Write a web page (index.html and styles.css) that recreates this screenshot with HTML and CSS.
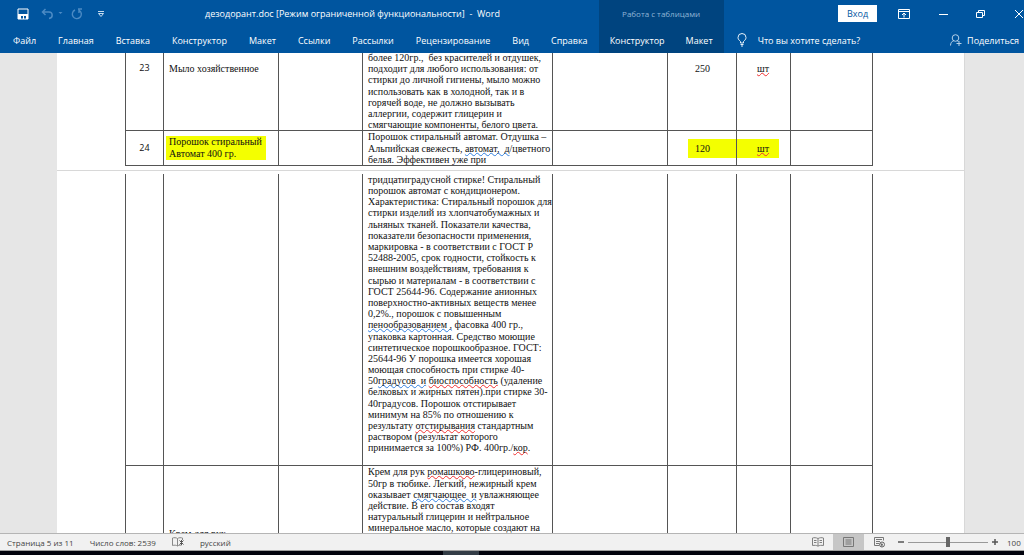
FILE: index.html
```
<!DOCTYPE html>
<html lang="ru">
<head>
<meta charset="utf-8">
<title>дезодорант.doc - Word</title>
<link rel="stylesheet" href="styles.css">
</head>
<body>
<header class="ribbon">
  <div class="title-bar">
    <div class="quick-access">
      <button class="icon-button" aria-label="Сохранить"><svg width="12" height="12" viewBox="0 0 12 12"><path d="M1 1h10v10H1z" fill="none" stroke="#fff"/><path d="M1 6h10v5H9V8H7v3H6V8H4v3H1z" fill="#fff"/></svg></button>
      <button class="icon-button undo" aria-label="Отменить"><svg width="22" height="12" viewBox="0 0 22 12"><path d="M4.500 1L1.500 4l3 3M2 4h6c4 0 4.500 6 0 6.500" fill="none" stroke="#4c8bc4" stroke-width="1.500"/><path d="M17.500 4h4l-2 2z" fill="#4c8bc4"/></svg></button>
      <button class="icon-button redo" aria-label="Повторить"><svg width="12" height="12" viewBox="0 0 12 12"><path d="M8.500 2.500A4.500 4.500 0 1 1 4 2M7 1h4M8 1v4" fill="none" stroke="#4c8bc4" stroke-width="1.400"/></svg></button>
      <button class="icon-button" aria-label="Настройка панели"><svg width="8" height="8" viewBox="0 0 8 8"><path d="M1 1.500h6M1.500 3.500h5L4 6.500z" fill="none" stroke="#c5dbee"/></svg></button>
    </div>
    <span class="document-name">дезодорант.doc [Режим ограниченной функциональности]&nbsp; -&nbsp; Word</span>
  </div>
  <div class="context-title">Работа с таблицами</div>
  <div class="window-controls">
    <button class="sign-in">Вход</button>
    <button class="icon-button" aria-label="Параметры ленты"><svg width="12" height="10" viewBox="0 0 12 10"><path d="M.5.5h11v9H.5zM.5 2.500h11M6 8.500v-4M4 6l2-2 2 2" fill="none" stroke="#fff"/></svg></button>
    <button class="icon-button" aria-label="Свернуть"><svg width="10" height="10" viewBox="0 0 10 10"><path d="M1 5.500h9" stroke="#fff"/></svg></button>
    <button class="icon-button" aria-label="Свернуть в окно"><svg width="10" height="10" viewBox="0 0 10 10"><path d="M.5 3.500h6v5h-6zM2.500 3V1.500h6v5H7" fill="none" stroke="#fff"/></svg></button>
    <button class="icon-button" aria-label="Закрыть"><svg width="10" height="10" viewBox="0 0 10 10"><path d="M1 1l8 8M9 1L1 9" stroke="#fff"/></svg></button>
  </div>
  <nav class="tabs main-tabs">
    <button class="tab">Файл</button>
    <button class="tab">Главная</button>
    <button class="tab">Вставка</button>
    <button class="tab">Конструктор</button>
    <button class="tab">Макет</button>
    <button class="tab">Ссылки</button>
    <button class="tab">Рассылки</button>
    <button class="tab">Рецензирование</button>
    <button class="tab">Вид</button>
    <button class="tab">Справка</button>
  </nav>
  <nav class="tabs context-tabs">
    <button class="tab">Конструктор</button>
    <button class="tab">Макет</button>
  </nav>
  <div class="ribbon-tools">
    <button class="tool"><svg width="10" height="14" viewBox="0 0 10 14"><path d="M3.500 10V8.500C2.500 7.500 1 6.500 1 4.500a4 4 0 0 1 8 0c0 2-1.500 3-2.500 4V10zM3.500 11.500h3M4 13h2" fill="none" stroke="#e6f0f8"/></svg>Что вы хотите сделать?</button>
    <button class="tool share"><svg width="12" height="12" viewBox="0 0 12 12"><circle cx="5.500" cy="4" r="3.300" fill="none" stroke="#b5d0e8"/><path d="M.5 11.500c0-2.500 1.500-4.500 3.500-5M7 6.500l1.500 1M9 7v5M6.500 9.500h5" fill="none" stroke="#b5d0e8"/></svg>Поделиться</button>
  </div>
</header>

<main class="workspace">
  <div class="sheet">
    <table class="goods goods-first">
      <colgroup><col class="c-num"><col class="c-name"><col class="c-blank"><col class="c-text"><col class="c-wide"><col class="c-count"><col class="c-unit"><col class="c-last"></colgroup>
      <tr class="row-23">
        <td class="number">23</td><td>Мыло хозяйственное</td><td></td>
        <td class="text">более 120гр.,&nbsp; без красителей и отдушек,<br>подходит для любого использования: от<br>стирки до личной гигиены, мыло можно<br>использовать как в холодной, так и в<br>горячей воде, не должно вызывать<br>аллергии, содержит глицерин и<br>смягчающие компоненты, белого цвета.</td>
        <td></td><td class="count">250</td><td class="unit"><span class="spelling">шт</span></td><td></td>
      </tr>
      <tr class="row-24">
        <td class="number">24</td><td class="marked-cell"><div class="mark mark-name">Порошок стиральный<br>Автомат 400 гр.</div></td><td></td>
        <td class="text">Порошок стиральный автомат. Отдушка –<br>Альпийская свежесть, <span class="grammar">автомат,&nbsp; д</span>/цветного<br>белья. Эффективен уже при</td>
        <td></td><td class="marked-cell"><div class="mark mark-count">120</div></td><td class="marked-cell"><div class="mark mark-unit"><span class="spelling">шт</span></div></td><td></td>
      </tr>
    </table>
  </div>
  <div class="sheet">
    <table class="goods goods-next">
      <colgroup><col class="c-num"><col class="c-name"><col class="c-blank"><col class="c-text"><col class="c-wide"><col class="c-count"><col class="c-unit"><col class="c-last"></colgroup>
      <tr class="row-rest">
        <td></td><td></td><td></td>
        <td class="text">тридцатиградусной стирке! Стиральный<br>порошок автомат с кондиционером.<br>Характеристика: Стиральный порошок для<br>стирки изделий из хлопчатобумажных и<br>льняных тканей. Показатели качества,<br>показатели безопасности применения,<br>маркировка - в соответствии с ГОСТ Р<br>52488-2005, срок годности, стойкость к<br>внешним воздействиям, требования к<br>сырью и материалам - в соответствии с<br>ГОСТ 25644-96. Содержание анионных<br>поверхностно-активных веществ менее<br>0,2%., порошок с повышенным<br><span class="grammar">пенообразованием ,</span> фасовка 400 гр.,<br>упаковка картонная. Средство моющие<br>синтетическое порошкообразное. ГОСТ:<br>25644-96 У порошка имеется хорошая<br>моющая способность при стирке 40-<br>50<span class="grammar">градусов&nbsp; и</span> <span class="spelling">биоспособность</span> (удаление<br>белковых и жирных пятен).при стирке 30-<br>40градусов. Порошок отстирывает<br>минимум на 85% по отношению к<br>результату <span class="spelling">отстирывания</span> стандартным<br>раствором (результат которого<br>принимается за 100%) РФ. 400гр./<span class="spelling">кор</span>.</td>
        <td></td><td></td><td></td><td></td>
      </tr>
      <tr class="row-25">
        <td></td><td class="low">Крем для рук</td><td></td>
        <td class="text">Крем для рук <span class="spelling">ромашково</span>-глицериновый,<br>50гр в тюбике. Легкий, нежирный крем<br>оказывает <span class="grammar">смягчающее&nbsp; и</span> увлажняющее<br>действие. В его состав входят<br>натуральный глицерин и нейтральное<br>минеральное масло, которые создают на</td>
        <td></td><td></td><td></td><td></td>
      </tr>
    </table>
  </div>
</main>

<footer class="status-bar">
  <span>Страница 5 из 11</span>
  <span>Число слов: 2539</span>
  <svg width="12" height="10" viewBox="0 0 12 10"><path d="M5.500 1.500C4 .5 2 .5.5 1v7.500c2-.5 3.500-.5 5 .5zC7 .5 9 .5 10.500 1v2M5.500 9c1-.7 2-1 4-.7" fill="none" stroke="#888"/><path d="M7.500 3.500l4 4M11.500 3.500l-4 4M9.500 3v5" stroke="#555"/></svg>
  <span>русский</span>
  <div class="views">
    <button class="view" aria-label="Режим чтения"><svg width="12" height="10" viewBox="0 0 12 10"><path d="M6 1.500C4 .5 2 .5.5 1v7.500c2-.3 4-.3 5.500.7 1.500-1 3.500-1 5.500-.7V1C9.500.5 8 .5 6 1.500V9M2 3.500h2.500M2 5.500h2.500M7.500 3.500H10M7.500 5.500H10" fill="none" stroke="#808080"/></svg></button>
    <button class="view active" aria-label="Разметка страницы"><svg width="12" height="10" viewBox="0 0 12 10"><path d="M.5.5h10v9H.5zM2.500 3h6M2.500 5h6M2.500 7h6" fill="none" stroke="#777"/></svg></button>
    <button class="view" aria-label="Веб-документ"><svg width="12" height="11" viewBox="0 0 12 11"><path d="M5 8.500H.5v-8h9v3M2 2.500h6M2 4.500h4M2 6.500h3" fill="none" stroke="#777"/><circle cx="8" cy="7.500" r="2.500" fill="#eee" stroke="#666"/><path d="M6 6l3 1-1 3z" fill="#666"/></svg></button>
  </div>
  <div class="zoom">
    <button class="step" aria-label="Уменьшить"><svg width="8" height="8" viewBox="0 0 8 8"><path d="M1 4h6" stroke="#555" stroke-width="1.500"/></svg></button>
    <input class="slider" type="range" min="0" max="100" value="50" aria-label="Масштаб">
    <button class="step" aria-label="Увеличить"><svg width="8" height="8" viewBox="0 0 8 8"><path d="M1 4h6M4 1v6" stroke="#555" stroke-width="1.500"/></svg></button>
    <span class="percent">100</span>
  </div>
</footer>
<div class="taskbar"><div class="task"></div></div>
</body>
</html>
```
FILE: styles.css
```
* { box-sizing: border-box; }
body {
  margin: 0;
  height: 100vh;
  display: flex;
  flex-direction: column;
  overflow: hidden;
  font-family: "Open Sans", "Noto Sans", sans-serif;
  font-size: 9px;
}
button {
  border: 0;
  padding: 0;
  background: none;
  color: inherit;
  font: inherit;
  white-space: nowrap;
}
svg { display: block; flex: none; }

.ribbon {
  display: grid;
  grid-template-columns: auto auto 1fr;
  grid-template-rows: 27px 26px;
  flex: none;
  background: #00559f;
  color: #fff;
}
.title-bar { display: flex; align-items: center; padding-left: 17px; }
.quick-access { display: flex; align-items: center; }
.undo { margin-left: 12px; }
.redo { margin: 0 14px 0 8px; }
.document-name { margin-left: 100px; white-space: nowrap; }
.context-title,
.context-tabs { background: #00447f; }
.context-title {
  display: flex;
  align-items: center;
  justify-content: center;
  color: #8fb4d6;
  font-size: 8px;
}
.window-controls {
  display: flex;
  align-items: center;
  justify-content: flex-end;
  gap: 28px;
}
.sign-in {
  width: 39px;
  height: 17px;
  margin-right: -7px;
  background: #fff;
  color: #00559f;
}
.tabs { display: flex; }
.tab { padding: 0 11px; }
.main-tabs { padding-left: 2px; }
.context-tabs { padding-right: 1px; }
.context-tabs .tab { padding: 0 10px 0 11px; }
.ribbon-tools {
  display: flex;
  justify-content: space-between;
  padding: 0 5px 0 13px;
}
.tool { display: flex; align-items: center; gap: 11px; }
.share { gap: 5px; }

.workspace {
  flex: 1;
  min-height: 0;
  overflow: hidden;
  padding: 0 59px 0 57px;
  background: #e6e6e6;
  font-family: "Liberation Serif", serif;
  font-size: 10px;
  line-height: 1.12;
  color: #111;
}
.sheet {
  padding: 0 91px 4px 68px;
  background: #fff;
  border: solid #d8d8d8;
  border-width: 0 1px 1px 0;
}
.sheet + .sheet { padding-top: 3px; }
.goods {
  width: 100%;
  table-layout: fixed;
  border-collapse: collapse;
}
.goods-first { margin-top: -1px; }
.goods td {
  padding: 0 5px;
  border: 1px solid #555;
  border-top: 0;
  white-space: nowrap;
}
.c-num { width: 38px; }
.c-name { width: 115px; }
.c-blank { width: 84px; }
.c-wide { width: 115px; }
.c-count { width: 69px; }
.c-unit { width: 54px; }
.c-last { width: 82px; }
.row-23 { height: 78px; }
.goods .row-23 td { vertical-align: top; padding-top: 11px; }
.row-24 { height: 34px; }
.row-rest { height: 292px; }
.goods .text { vertical-align: top; }
.goods .row-23 .text { padding-top: 0; }
.goods .number {
  text-align: center;
  font-family: "Open Sans", "Noto Sans", sans-serif;
  font-size: 9px;
}
.goods .row-23 .count { padding-left: 27px; }
.goods .row-23 .unit { padding-left: 20px; }
.goods .low { vertical-align: top; padding-top: 62px; }
.goods .marked-cell { padding: 0; }
.mark { background: #f4ff00; }
.mark-name { margin: 0 12px 0 2px; padding: 0 3px 1px; }
.mark-count { margin-left: 20px; padding: 4px 7px; }
.mark-unit { margin-right: 11px; padding: 4px 20px; }
.spelling { text-decoration: underline wavy #f03030 1px; }
.grammar { text-decoration: underline wavy #3080e0 1px; }
.spelling,
.grammar { text-decoration-skip-ink: none; text-underline-offset: 0; }

.status-bar {
  display: flex;
  align-items: center;
  flex: none;
  height: 18px;
  gap: 16px;
  padding-left: 7px;
  background: #f1f1f1;
  border-top: 1px solid #b5b5b5;
  border-bottom: 1px solid #a0a0a0;
  color: #444;
  font-size: 8px;
  white-space: nowrap;
}
.views { display: flex; align-self: stretch; margin-left: auto; }
.view { width: 31px; display: grid; place-items: center; }
.view.active { background: #c6c6c6; }
.zoom { display: flex; align-items: center; gap: 3px; margin-left: -14px; }
.slider {
  appearance: none;
  width: 80px;
  height: 10px;
  margin: 0;
  background: linear-gradient(#999, #999) center / 100% 1px no-repeat;
}
.slider::-webkit-slider-thumb {
  appearance: none;
  width: 4px;
  height: 10px;
  background: #666;
}
.percent { width: 17px; margin-left: 5px; }
.taskbar { flex: none; height: 4px; background: #02030d; }
.task { width: 36px; height: 4px; margin-left: 443px; background: #333c46; }
```
